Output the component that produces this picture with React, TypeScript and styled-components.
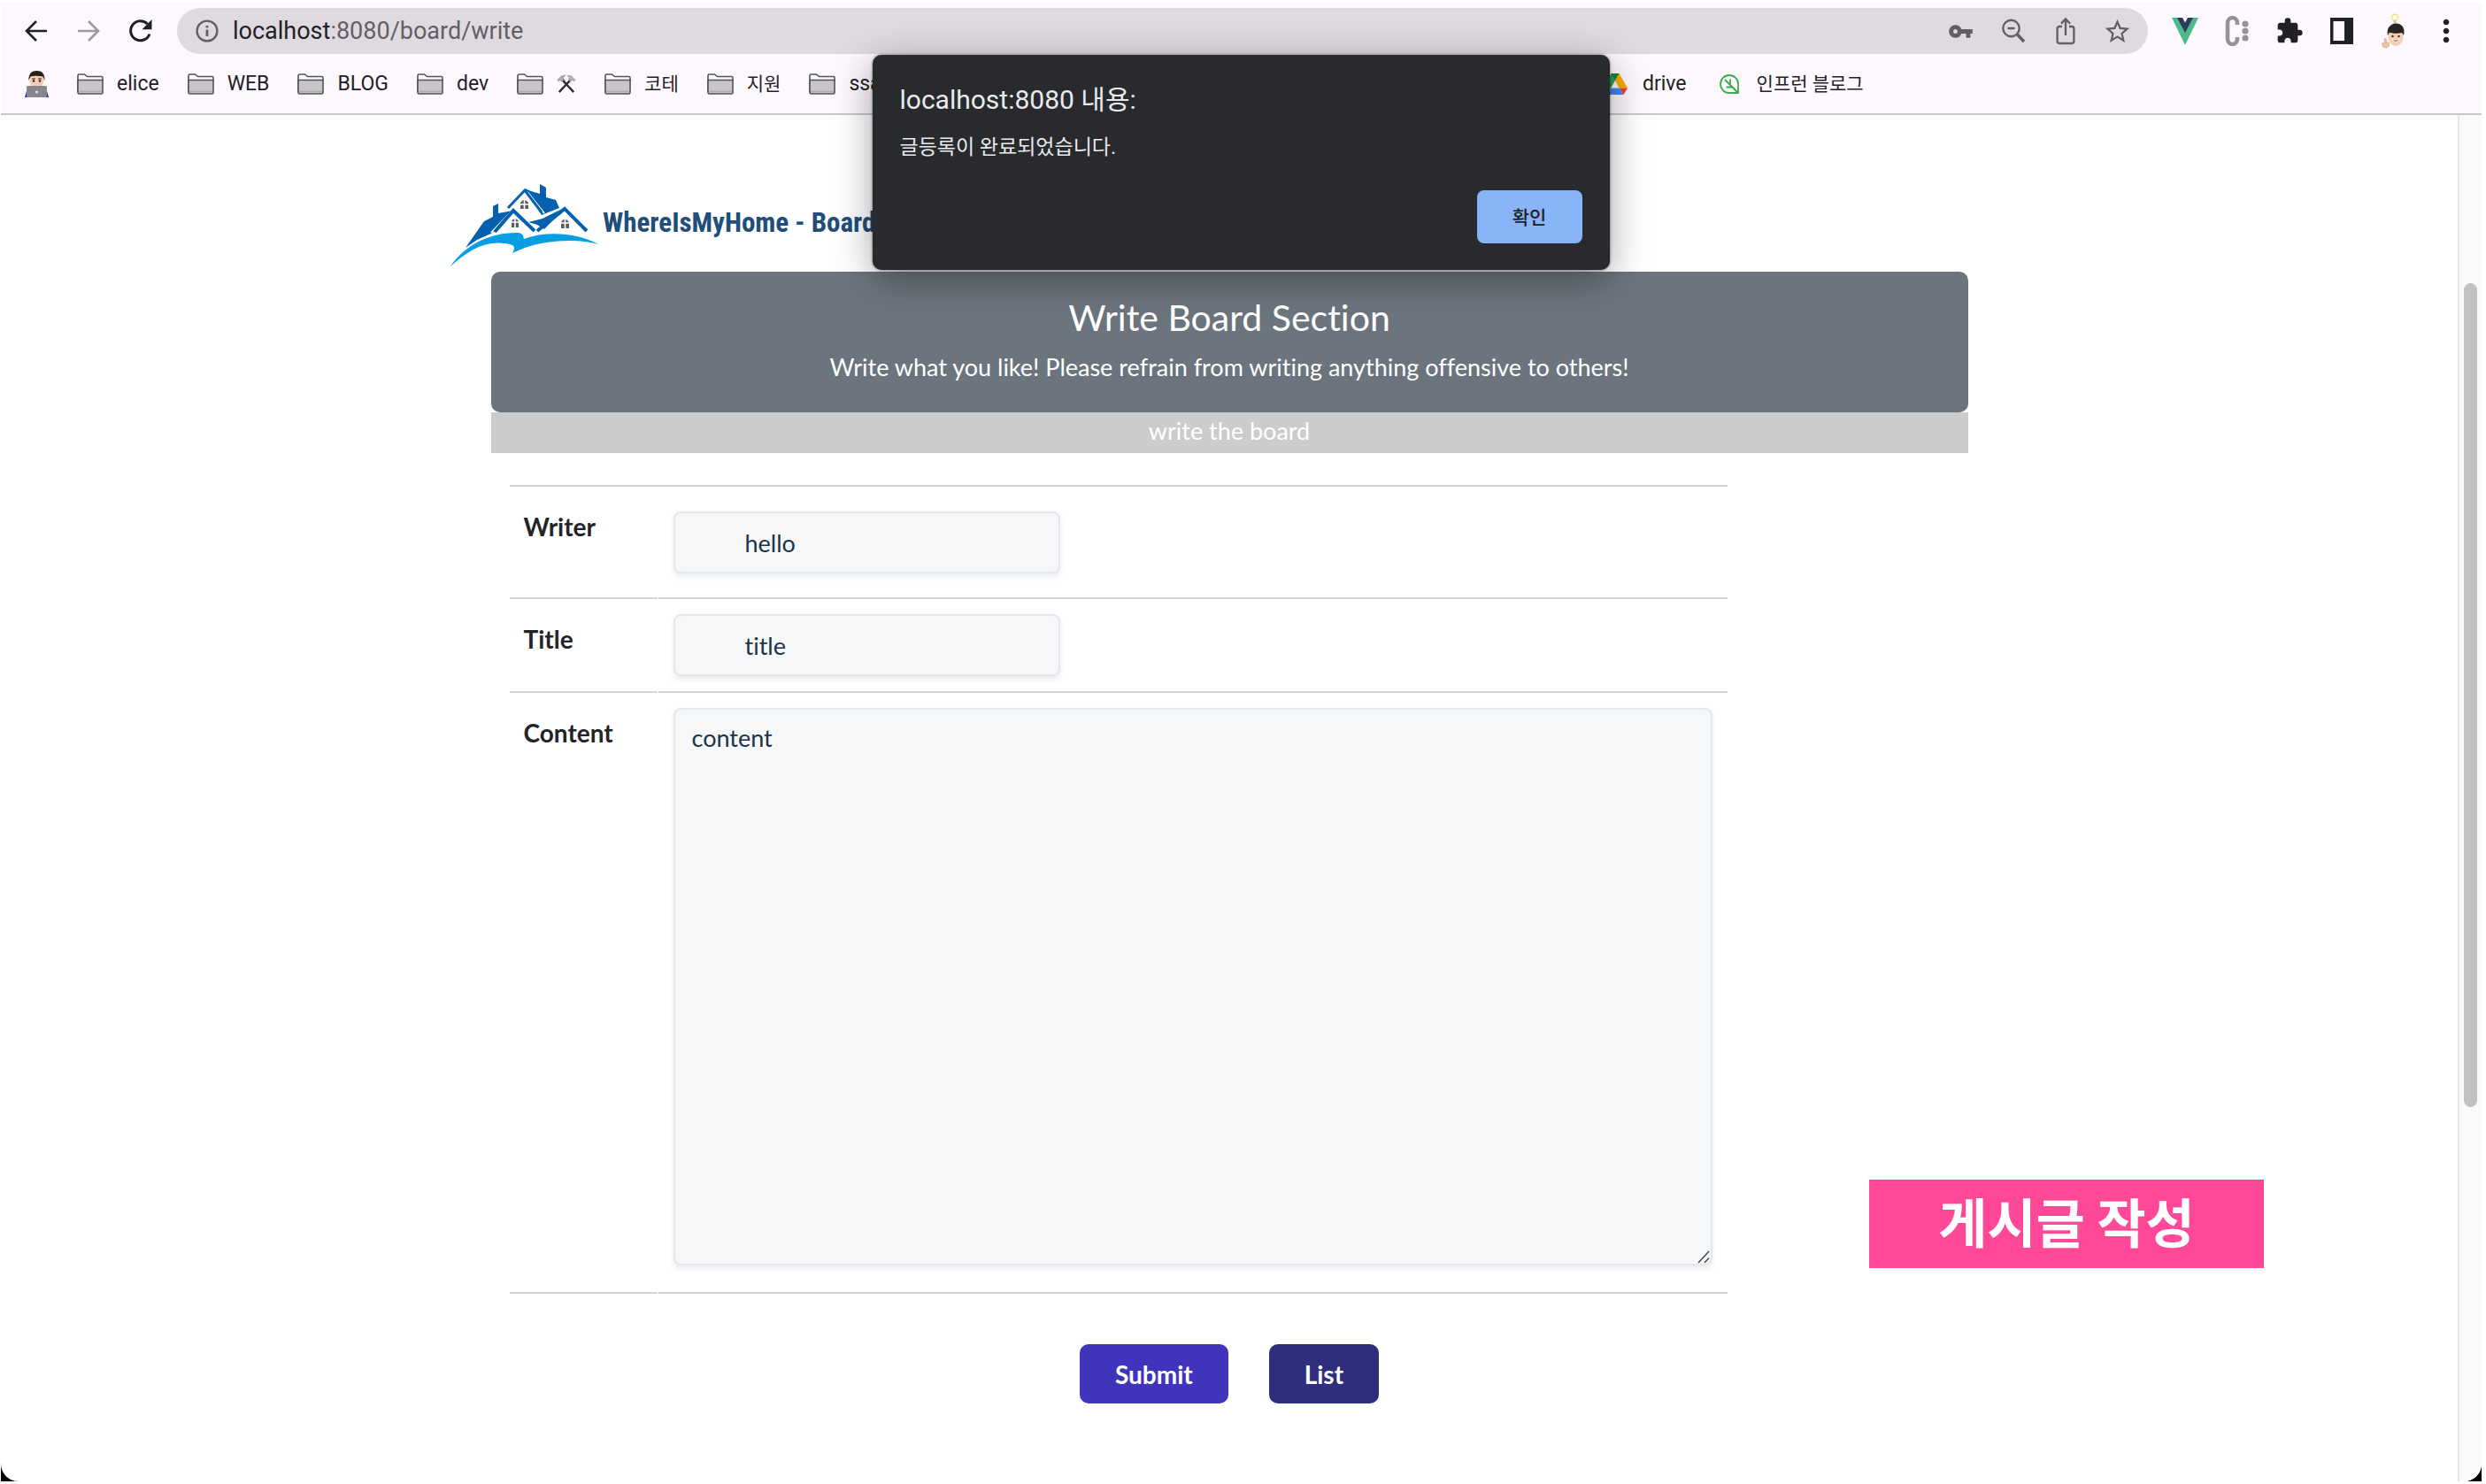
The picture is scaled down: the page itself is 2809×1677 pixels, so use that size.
import React from "react";
import styled, { createGlobalStyle } from "styled-components";
import { MdVpnKey, MdStarOutline, MdExtension, MdMoreVert } from "react-icons/md";

const uiFont = `Roboto, "Noto Sans CJK KR", sans-serif`;
const pageFont = `Lato, "Noto Sans CJK KR", sans-serif`;

const GlobalStyle = createGlobalStyle`
  *, *::before, *::after { box-sizing: border-box; }
  body { margin: 0; background: #fff; }
  button, input, textarea { font: inherit; color: inherit; }
  h1, h2, p { margin: 0; font-weight: 400; }
`;

/* ---------- window frame ---------- */

const Screen = styled.div`
  min-height: 100vh;
  padding: 2px 5px 3px 1px;
  background: #fff;
  display: flex;
  position: relative;
`;

const Backdrop = styled.div`
  flex: 1;
  display: flex;
  background: linear-gradient(#fff 50%, #000 50%);
`;

const BrowserWindow = styled.div`
  flex: 1;
  display: flex;
  flex-direction: column;
  background: #fff;
  border-radius: 0 0 20px 20px;
  overflow: hidden;
`;

const Chrome = styled.header`
  background: #fdf8fd;
  border-bottom: 2px solid #c8c7cf;
  font-family: ${uiFont};
  color: #1f2125;
`;

const Toolbar = styled.div`
  display: flex;
  align-items: center;
  padding: 7px 11px 7px 10px;
`;

const IconButton = styled.button<{ $tone?: string }>`
  width: 59px;
  height: 48px;
  flex: none;
  display: flex;
  align-items: center;
  justify-content: center;
  border: 0;
  padding: 0;
  background: none;
  color: ${(p) => p.$tone ?? "#1f2125"};
`;

const NavButtons = styled.div`
  display: flex;
  width: 189px;
  flex: none;
`;

const AddressBar = styled.div`
  flex: 1;
  height: 52px;
  display: flex;
  align-items: center;
  gap: 16px;
  padding: 0 5px 0 21px;
  border-radius: 26px;
  background: #dfdadf;
  color: #5f6065;
`;

const Address = styled.p`
  flex: 1;
  font-size: 27px;
  line-height: 36px;
`;

const Host = styled.span`
  color: #1f2125;
`;

const AddressActions = styled.div`
  display: flex;
`;

const Extensions = styled.div`
  display: flex;
  margin-left: 12px;
`;

const Bookmarks = styled.nav`
  display: flex;
  align-items: center;
  height: 60px;
  padding: 0 27px 6px;
`;

const BookmarkGroup = styled.div<{ $width?: number }>`
  display: flex;
  align-items: center;
  gap: 32px;
  flex: none;
  width: ${(p) => (p.$width ? `${p.$width}px` : "auto")};
`;

const Bookmark = styled.a<{ $korean?: boolean }>`
  display: flex;
  align-items: center;
  gap: 15px;
  flex: none;
  color: #1f2125;
  font-size: ${(p) => (p.$korean ? 21 : 23)}px;
  line-height: 30px;
  text-decoration: none;
  white-space: nowrap;
`;

const Favicon = styled.span`
  width: 32px;
  display: flex;
  justify-content: center;
`;

/* ---------- page ---------- */

const Viewport = styled.div`
  flex: 1;
  display: flex;
`;

const Page = styled.main`
  flex: 1;
  padding: 76px 24px 60px;
  font-family: ${pageFont};
  font-size: 27px;
  line-height: 40px;
  font-variant-ligatures: none;
  color: #212529;
`;

const SiteHeader = styled.header`
  max-width: 1760px;
  margin: 0 auto 5px;
  display: flex;
  align-items: center;
  gap: 4px;
  height: 96px;
`;

const Brand = styled.h1`
  font-family: "Liberation Sans Narrow", "Roboto Condensed", "Liberation Sans", sans-serif;
  font-size: 31px;
  line-height: 40px;
  padding-bottom: 4px;
  font-weight: 700;
  color: #1f4e79;
`;

const Section = styled.section`
  max-width: 1669px;
  margin: 0 auto;
`;

const Jumbotron = styled.div`
  padding: 30px 24px 28px;
  height: 159px;
  border-radius: 10px;
  background: #6c747d;
  color: #fff;
  text-align: center;
`;

const JumboTitle = styled.h2`
  font-size: 41px;
  line-height: 44px;
  margin-bottom: 14px;
`;

const Strip = styled.p`
  padding-bottom: 4px;
  background: #ccc;
  color: #fff;
  text-align: center;
  line-height: 42px;
`;

const Form = styled.form`
  padding-top: 36px;
`;

const Fields = styled.div`
  max-width: 1376px;
  margin-left: 21px;
  border-top: 2px solid #d3d5d6;
`;

const Row = styled.div`
  display: grid;
  grid-template-columns: 167px 1fr;
  column-gap: 1px;
`;

const LabelCell = styled.label`
  padding: 25px 16px;
  border-bottom: 2px solid #d3d5d6;
  font-size: 28px;
  font-weight: 700;
`;

const FieldCell = styled.div<{ $top: number; $bottom: number }>`
  padding: ${(p) => p.$top}px 17px ${(p) => p.$bottom}px;
  border-bottom: 2px solid #d3d5d6;
  display: flex;
  position: relative;
`;

const fieldLook = `
  border: 2px solid #e4e7eb;
  border-radius: 8px;
  background: #f5f7f9;
  box-shadow: 0 4px 6px rgba(0, 0, 0, 0.08);
  color: #1c3349;
  outline: none;
`;

const TextField = styled.input`
  ${fieldLook}
  width: 437px;
  height: 70px;
  padding: 0 79px;
`;

const TextArea = styled.textarea`
  ${fieldLook}
  width: 100%;
  height: 630px;
  padding: 12px 19px;
  resize: none;
`;

const Grip = styled.svg`
  position: absolute;
  right: 20px;
  bottom: 32px;
`;

const Actions = styled.div`
  display: flex;
  justify-content: center;
  gap: 46px;
  padding-top: 57px;
`;

const ActionButton = styled.button<{ $color: string }>`
  height: 67px;
  padding: 0 40px;
  border: 0;
  border-radius: 10px;
  background: ${(p) => p.$color};
  color: #fff;
  font-size: 28px;
  font-weight: 700;
`;

const ScrollTrack = styled.div`
  width: 27px;
  flex: none;
  display: grid;
  grid-template-rows: 190fr 931fr 423fr;
  justify-items: center;
  background: #fafafa;
  border-left: 2px solid #e8e8e8;
`;

const ScrollThumb = styled.div`
  grid-row: 2;
  width: 15px;
  border-radius: 8px;
  background: #c1c1c1;
`;

/* ---------- overlays ---------- */

const AlertBox = styled.div`
  position: absolute;
  top: 62px;
  left: 50%;
  width: 833px;
  margin-left: -419px;
  height: 243px;
  padding: 33px 31px 30px;
  display: flex;
  flex-direction: column;
  border-radius: 10px;
  background: #292a2d;
  box-shadow: 0 0 3px rgba(0, 0, 0, 0.6), 0 10px 44px rgba(0, 0, 0, 0.36);
  color: #e8eaed;
  font-family: ${uiFont};
`;

const AlertTitle = styled.h2`
  font-size: 30px;
  line-height: 36px;
`;

const AlertText = styled.p`
  margin-top: 20px;
  font-size: 23px;
  line-height: 32px;
`;

const AlertButton = styled.button`
  margin-top: auto;
  align-self: flex-end;
  width: 119px;
  height: 60px;
  padding: 0 0 3px;
  border: 0;
  border-radius: 8px;
  background: #8ab4f8;
  color: #202124;
  font-size: 21px;
  font-weight: 500;
`;

const Caption = styled.div`
  position: absolute;
  right: 251px;
  bottom: 244px;
  width: 446px;
  height: 100px;
  background: #ff4998;
  color: #fff;
  font-family: "Noto Sans CJK KR", sans-serif;
  font-size: 60px;
  line-height: 92px;
  font-weight: 700;
  text-align: center;
`;

/* ---------- icons ---------- */

const BackIcon = ({ flip = false }: { flip?: boolean }) => (
  <svg width="26" height="26" viewBox="0 0 26 26" fill="none" stroke="currentColor" strokeWidth="2.6">
    <path d={flip ? "M1 13H24M13 2L24 13L13 24" : "M25 13H2M13 2L2 13L13 24"} />
  </svg>
);

const ReloadIcon = () => (
  <svg width="28" height="28" viewBox="0 0 28 28">
    <path d="M24 17.5A11 11 0 1 1 21.5 6" fill="none" stroke="currentColor" strokeWidth="3" />
    <path d="M26.5 1V12.2H15.5Z" fill="currentColor" />
  </svg>
);

const InfoIcon = () => (
  <svg width="26" height="26" viewBox="0 0 26 26" fill="none" stroke="currentColor" strokeWidth="2.4">
    <circle cx="13" cy="13" r="11.4" />
    <path d="M13 11.5V19M13 7V9.6" strokeWidth="2.8" />
  </svg>
);

const ZoomOutIcon = () => (
  <svg width="28" height="30" viewBox="0 0 28 30" fill="none" stroke="currentColor" strokeWidth="2.4">
    <circle cx="11.5" cy="12" r="9.2" />
    <path d="M7.5 12H15.5" />
    <path d="M18 18.5L26 27" strokeWidth="3.4" />
  </svg>
);

const ShareIcon = () => (
  <svg width="24" height="34" viewBox="0 0 24 34" fill="none" stroke="currentColor" strokeWidth="2.3">
    <path d="M8 12H5A2.4 2.4 0 0 0 2.6 14.4V28.6A2.4 2.4 0 0 0 5 31H19A2.4 2.4 0 0 0 21.4 28.6V14.4A2.4 2.4 0 0 0 19 12H16" />
    <path d="M12 22V4M7 8.6L12 3.4L17 8.6" />
  </svg>
);

const VueIcon = () => (
  <svg width="30" height="32" viewBox="0 0 30 32">
    <path d="M0 1H7L15 15L23 1H30L15 32Z" fill="#4dba87" />
    <path d="M6 1H12L15 6.5L18 1H24L15 18Z" fill="#2c3a5c" />
  </svg>
);

const ColorExtensionIcon = () => (
  <svg width="28" height="36" viewBox="0 0 28 36">
    <path d="M14 11V9A5.500 6 0 0 0 3 9V27A5.500 6 0 0 0 14 27V25" fill="none" stroke="#949494" strokeWidth="4.6" />
    <g fill="#949494">
      <circle cx="23" cy="10" r="3.6" />
      <circle cx="23" cy="18" r="3.6" />
      <circle cx="23" cy="26" r="3.6" />
    </g>
  </svg>
);

const SidePanelIcon = () => (
  <svg width="28" height="32" viewBox="0 0 28 32">
    <path d="M1 1H27V31H1ZM4.500 5V27H17V5Z" fill="currentColor" fillRule="evenodd" />
  </svg>
);

const ProfileIcon = () => (
  <svg width="28" height="42" viewBox="0 0 28 42">
    <circle cx="15" cy="5.5" r="3.4" fill="#fffbe0" stroke="#f3dc74" strokeWidth="1.2" />
    <path d="M13.5 9H16.5V13H13.5Z" fill="#c9c4b0" />
    <ellipse cx="16" cy="28" rx="8.5" ry="10" fill="#f3cfb4" />
    <path d="M7 26C5 17 11 12.5 16.5 12.5C23 12.5 27 18 25 26L23 23C17 24.5 11 23.5 9 22.5Z" fill="#26231f" />
    <circle cx="12.5" cy="27" r="1.2" fill="#3a2a20" />
    <circle cx="19.5" cy="27" r="1.2" fill="#3a2a20" />
    <path d="M12 31Q16 35.5 20 31Z" fill="#b5434a" stroke="#fff" strokeWidth="0.8" />
    <path d="M3 30L5 29.5L5.5 33.5L8.5 34.5V38L5.5 40L1.5 39L0.5 35L3.5 34Z" fill="#efc3a5" stroke="#cf9c7c" strokeWidth="0.6" />
  </svg>
);

const CoderIcon = () => (
  <svg width="27" height="30" viewBox="0 0 27 30">
    <path d="M0 30L2 23H25L27 30Z" fill="#2626c9" />
    <path d="M5.5 10C5.5 4 9 2 13.5 2S21.5 4 21.5 10C21.5 16 18 20 13.5 20S5.5 16 5.5 10Z" fill="#f3cfb4" />
    <path d="M4.5 11C4 3 8 0 13.5 0S23 3 22.5 11L20.5 6.5C16 5.5 10 5.5 6.500 6.5Z" fill="#26231f" />
    <path d="M8 9H12M15 9H19" stroke="#2c211a" strokeWidth="1" />
    <circle cx="10" cy="11.5" r="1.3" fill="#2c211a" />
    <circle cx="17" cy="11.5" r="1.3" fill="#2c211a" />
    <rect x="2" y="17" width="23" height="13" rx="1.5" fill="#85878a" />
    <circle cx="13.5" cy="24" r="1.5" fill="#e9e9ea" />
  </svg>
);

const FolderIcon = () => (
  <svg width="30" height="24" viewBox="0 0 30 24" stroke="#545456" strokeWidth="1.6">
    <path d="M1 21V2.5Q1 1 2.5 1H8.5L11.5 3.5H27.5Q29 3.5 29 5V8H1Z" fill="#fdf8fd" />
    <path d="M1 7.5H29V21.5Q29 23 27.5 23H2.5Q1 23 1 21.5Z" fill="#c8c6c9" />
    <path d="M2 20.5H28" stroke="#a9a8ab" />
  </svg>
);

const HammersIcon = () => (
  <svg width="22" height="24" viewBox="0 0 24 24">
    <path d="M7 7L21 22M16 8L3 22" stroke="#2e2e31" strokeWidth="2.6" />
    <path d="M1 7L6 2L11 1L8 4L9 7L6 9L4 7L2 8.5Z" fill="#a9abb3" stroke="#77797f" strokeWidth="0.6" />
    <path d="M13 1.5L18 2L23 7L21.5 8.5L19 7L16.5 9L14.5 6.5L16 4Z" fill="#b4b6bd" stroke="#77797f" strokeWidth="0.6" />
    <path d="M8 6L11 8M16 8L18 7" stroke="#c04a4a" strokeWidth="1" />
  </svg>
);

const DriveIcon = () => (
  <svg width="28" height="25" viewBox="0 0 28 25">
    <path d="M9.5 0H18.5L14 8L5 24L0 16.5Z" fill="#2ca052" />
    <path d="M9.5 0H18.5L14 8Z" fill="#188038" />
    <path d="M18.5 0L28 16.5H18.5L14 8Z" fill="#f9ab00" />
    <path d="M18.5 16.5H28L23.5 24Z" fill="#ea4335" />
    <path d="M9.5 16.5H18.5L23.5 24H5Z" fill="#4285f4" />
  </svg>
);

const LeafIcon = () => (
  <svg width="22" height="22" viewBox="0 0 22 22" fill="none" stroke="#36ae45" strokeWidth="1.8">
    <path d="M11 1A10 10 0 0 1 21 11V21H11A10 10 0 0 1 11 1Z" />
    <path d="M6 6L20 20M12 12V5.5M14.5 14.5H7.5" />
  </svg>
);

const Logo = () => (
  <svg width="168" height="93" viewBox="0 0 168 93">
    <g fill="#0560b0">
      <path d="M17 72L38 42L48 37V25L54 22V33L71 30L48 55L30 63Z" />
      <path d="M84 5L91 8L101 11V0L108 4V15L119 18L123 27L103 35Z" />
      <path d="M88 43L104 39L130 26L106 51L98 46Z" />
    </g>
    <g fill="none" stroke="#fff" strokeWidth="2">
      <path d="M46 55L69 31" />
      <path d="M87 9L106 33" />
      <path d="M101 51L126 29" />
    </g>
    <path d="M73 33L92 53H54Z" fill="#fff" />
    <path d="M50 54L71 30L95 53M98 53L129 28L154 53" fill="none" stroke="#0560b0" strokeWidth="4" />
    <path d="M129 31L150 53H107Z" fill="#fff" />
    <path d="M65 27L84 7L103 32" fill="none" stroke="#0560b0" strokeWidth="3" />
    <path d="M0 93C16 69 45 54 77 55C84 57 82 60 83 62C110 52 145 56 167 68C142 61 108 64 84 72L70 78C73 73 72 70 70 69C43 61 21 74 0 93Z" fill="#069fe3" />
    <g fill="#5c5c5e">
      <path d="M79 28V21Q83 15 88 21V28Z" />
      <path d="M69 49V42Q73 36 77 42V49Z" />
      <path d="M125 50V43Q129 36 134 43V50Z" />
    </g>
    <path d="M83.5 15V30M77 23H90M73 36V51M67 43H79M129.5 36V52M123 44H136" stroke="#fff" strokeWidth="1.6" />
  </svg>
);

/* ---------- app ---------- */

const folders = [
  { name: "elice" },
  { name: "WEB" },
  { name: "BLOG" },
  { name: "dev" },
  { name: "tools", icon: <HammersIcon /> },
  { name: "코테", korean: true },
  { name: "지원", korean: true },
  { name: "ssafy" },
];

export default function App() {
  return (
    <>
      <GlobalStyle />
      <Screen>
        <Backdrop>
          <BrowserWindow>
            <Chrome>
              <Toolbar>
                <NavButtons>
                  <IconButton aria-label="Back"><BackIcon /></IconButton>
                  <IconButton aria-label="Forward" $tone="#9c999e"><BackIcon flip /></IconButton>
                  <IconButton aria-label="Reload"><ReloadIcon /></IconButton>
                </NavButtons>
                <AddressBar>
                  <InfoIcon />
                  <Address><Host>localhost</Host>:8080/board/write</Address>
                  <AddressActions>
                    <IconButton aria-label="Passwords" $tone="#5f6065"><MdVpnKey size={29} /></IconButton>
                    <IconButton aria-label="Zoom" $tone="#5f6065"><ZoomOutIcon /></IconButton>
                    <IconButton aria-label="Share" $tone="#5f6065"><ShareIcon /></IconButton>
                    <IconButton aria-label="Bookmark this page" $tone="#5f6065"><MdStarOutline size={33} /></IconButton>
                  </AddressActions>
                </AddressBar>
                <Extensions>
                  <IconButton aria-label="Vue devtools"><VueIcon /></IconButton>
                  <IconButton aria-label="Color picker"><ColorExtensionIcon /></IconButton>
                  <IconButton aria-label="Extensions"><MdExtension size={32} /></IconButton>
                  <IconButton aria-label="Side panel"><SidePanelIcon /></IconButton>
                  <IconButton aria-label="Profile"><ProfileIcon /></IconButton>
                  <IconButton aria-label="Menu"><MdMoreVert size={40} /></IconButton>
                </Extensions>
              </Toolbar>
              <Bookmarks>
                <BookmarkGroup $width={1781}>
                  <Bookmark href="#" aria-label="Home"><CoderIcon /></Bookmark>
                  {folders.map(({ name, icon, korean }) => (
                    <Bookmark href="#" key={name} aria-label={name} $korean={korean}>
                      <FolderIcon />
                      {icon ?? name}
                    </Bookmark>
                  ))}
                </BookmarkGroup>
                <BookmarkGroup>
                  <Bookmark href="#"><Favicon><DriveIcon /></Favicon>drive</Bookmark>
                  <Bookmark href="#" $korean><Favicon><LeafIcon /></Favicon>인프런 블로그</Bookmark>
                </BookmarkGroup>
              </Bookmarks>
            </Chrome>
            <Viewport>
              <Page>
                <SiteHeader>
                  <Logo />
                  <Brand>WhereIsMyHome - Board</Brand>
                </SiteHeader>
                <Section>
                  <Jumbotron>
                    <JumboTitle>Write Board Section</JumboTitle>
                    <p>Write what you like! Please refrain from writing anything offensive to others!</p>
                  </Jumbotron>
                  <Strip>write the board</Strip>
                  <Form onSubmit={(e) => e.preventDefault()}>
                    <Fields>
                      <Row>
                        <LabelCell htmlFor="writer">Writer</LabelCell>
                        <FieldCell $top={28} $bottom={27}>
                          <TextField id="writer" defaultValue="hello" />
                        </FieldCell>
                      </Row>
                      <Row>
                        <LabelCell htmlFor="title">Title</LabelCell>
                        <FieldCell $top={17} $bottom={17}>
                          <TextField id="title" defaultValue="title" />
                        </FieldCell>
                      </Row>
                      <Row>
                        <LabelCell htmlFor="content">Content</LabelCell>
                        <FieldCell $top={17} $bottom={30}>
                          <TextArea id="content" defaultValue="content" />
                          <Grip width="14" height="15" viewBox="0 0 14 15" stroke="#4c4c4c" strokeWidth="1.6">
                            <path d="M1 14L13 1M8 14L13 8.5" />
                          </Grip>
                        </FieldCell>
                      </Row>
                    </Fields>
                    <Actions>
                      <ActionButton type="submit" $color="#3f34bb">Submit</ActionButton>
                      <ActionButton type="button" $color="#2f2d7e">List</ActionButton>
                    </Actions>
                  </Form>
                </Section>
              </Page>
              <ScrollTrack><ScrollThumb /></ScrollTrack>
            </Viewport>
          </BrowserWindow>
        </Backdrop>
        <AlertBox role="alertdialog" aria-labelledby="alert-title" aria-describedby="alert-text">
          <AlertTitle id="alert-title">localhost:8080 내용:</AlertTitle>
          <AlertText id="alert-text">글등록이 완료되었습니다.</AlertText>
          <AlertButton>확인</AlertButton>
        </AlertBox>
        <Caption>게시글 작성</Caption>
      </Screen>
    </>
  );
}
